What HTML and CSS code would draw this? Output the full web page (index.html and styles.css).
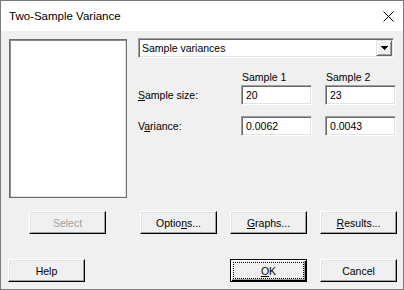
FILE: index.html
```html
<!DOCTYPE html>
<html>
  <head>
    <title>Two-Sample Variance</title>
    <meta name="viewport" content="width=device-width, initial-scale=1.0" />
    <link rel="stylesheet" href="styles.css">
  </head>
  <body>
    <div class="window">
      <div class="titlebar">
        <span class="title">Two-Sample Variance</span>
        <svg class="close" width="11" height="11" viewBox="0 0 11 11">
          <path d="M0.5 0.5L10.5 10.5M10.5 0.5L0.5 10.5" />
        </svg>
      </div>

      <div class="main">
        <div class="listbox"></div>

        <div class="panel">
          <div class="combo">
            <span class="combo-text">Sample variances</span>
            <span class="combo-btn">
              <svg width="7" height="4" viewBox="0 0 7 4">
                <path d="M0 0h7v1H0zM1 1h5v1H1zM2 2h3v1H2zM3 3h1v1H3z" />
              </svg>
            </span>
          </div>

          <div class="grid">
            <span></span>
            <span class="col-head">Sample 1</span>
            <span class="col-head">Sample 2</span>

            <span class="label"><u>S</u>ample size:</span>
            <div class="field">20</div>
            <div class="field">23</div>

            <span class="label">V<u>a</u>riance:</span>
            <div class="field">0.0062</div>
            <div class="field">0.0043</div>
          </div>
        </div>
      </div>

      <div class="btn-row row-top">
        <button class="btn disabled">Select</button>
        <div class="btn-group">
          <button class="btn">Optio<u>n</u>s...</button>
          <button class="btn"><u>G</u>raphs...</button>
          <button class="btn"><u>R</u>esults...</button>
        </div>
      </div>

      <div class="btn-row row-bottom">
        <button class="btn">Help</button>
        <div class="btn-group">
          <button class="btn btn-default"><u>O</u>K</button>
          <button class="btn">Cancel</button>
        </div>
      </div>
    </div>
  </body>
</html>
```

FILE: styles.css
```css
body {
  margin: 0;
}

* {
  box-sizing: border-box;
}

.window {
  width: 404px;
  height: 290px;
  border: 1px solid #7a7a7a;
  background: #f0f0f0;
  font-family: "Liberation Sans", Arial, sans-serif;
  font-size: 10.5px;
  color: #000;
}

.titlebar {
  height: 30px;
  background: #fff;
  display: flex;
  align-items: center;
  justify-content: space-between;
  padding: 0 9px 0 8px;
}

.title {
  font-size: 11.5px;
}

.close path {
  stroke: #000;
  stroke-width: 1;
  fill: none;
}

.main {
  display: flex;
  align-items: flex-start;
  padding: 8px 0 0 8px;
}

.listbox {
  flex-shrink: 0;
  width: 118px;
  height: 159px;
  background: #fff;
  border: 1px solid #6d6d6d;
  box-shadow: inset 1px 1px #8a8a8a, inset -1px -1px #e3e3e3;
}

.panel {
  margin: -1px 0 0 11px;
}

/* sunken edit look, shared by combo and fields */
.combo,
.field {
  background: #fff;
  border: 1px solid;
  border-color: #a0a0a0 #fff #fff #a0a0a0;
  box-shadow: inset 1px 1px #696969, inset -1px -1px #e3e3e3;
}

.combo {
  width: 256px;
  height: 20px;
  padding: 1px;
  display: flex;
  align-items: center;
  justify-content: space-between;
}

.combo-text {
  padding-left: 2px;
}

.combo-btn {
  width: 16px;
  height: 16px;
  background: #f0f0f0;
  border: 1px solid;
  border-color: #e3e3e3 #696969 #696969 #e3e3e3;
  box-shadow: inset 1px 1px #fff, inset -1px -1px #a0a0a0;
  display: flex;
  align-items: center;
  justify-content: center;
}

.combo-btn path {
  fill: #000;
}

.grid {
  display: grid;
  grid-template-columns: 90px 71px 71px;
  grid-template-rows: 16px 31px 20px;
  column-gap: 13px;
  margin-top: 11px;
  align-items: start;
}

.col-head {
  align-self: end;
  line-height: 13px;
  padding: 0 0 1px 1px;
}

.label {
  line-height: 20px;
}

.field {
  height: 20px;
  padding: 0 4px;
  line-height: 18px;
}

.btn-row {
  display: flex;
  justify-content: space-between;
  padding-right: 6px;
}

.row-top {
  margin-top: 13px;
  padding-left: 28px;
}

.row-bottom {
  margin-top: 25px;
  padding-left: 7px;
}

.btn-group {
  display: flex;
  gap: 13px;
}

.btn {
  width: 77px;
  height: 23px;
  padding: 0;
  background: #f0f0f0;
  border: 1px solid;
  border-color: #fff #000 #000 #fff;
  box-shadow: inset -1px -1px #a0a0a0, inset 1px 1px #e3e3e3;
  font: inherit;
  color: #000;
}

.btn.disabled {
  color: #a0a0a0;
}

.btn-default {
  border-color: #000;
  box-shadow: inset 1px 1px #fff, inset -1px -1px #000, inset -2px -2px #a0a0a0;
  outline: 1px dotted #000;
  outline-offset: -4px;
}
```
